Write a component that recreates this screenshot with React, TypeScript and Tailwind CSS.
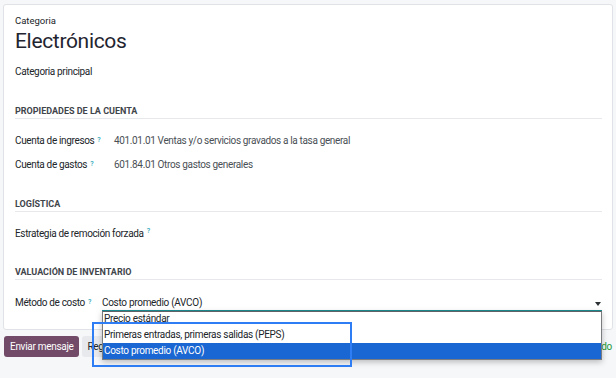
import React from "react";

function Help() {
  return (
    <sup className="ml-[3px] text-[7px] font-medium tracking-normal text-[#2aa7bb] relative top-[-2px]">?</sup>
  );
}

function SectionTitle({ title, className }: { title: string; className: string }) {
  return (
    <div className={`border-b border-[#e6e8eb] ${className}`}>
      <div className="h-[12px] leading-[12px] text-[9px] font-bold text-[#3f454b]">{title}</div>
    </div>
  );
}

function Row({ label, value, className }: { label: string; value: string; className: string }) {
  return (
    <div className={`flex h-[14px] items-center whitespace-nowrap text-[10px] tracking-[-0.35px] ${className}`}>
      <div className="w-[87px] shrink-0 text-[#212529]">
        {label}
        <Help />
      </div>
      <div className="pl-[12px] text-[#4a4f55]">{value}</div>
    </div>
  );
}

export default function App() {
  return (
    <div
      className="relative h-[378px] w-[616px] overflow-hidden bg-[#f6f7f9]"
      style={{ fontFamily: "Roboto, 'Liberation Sans', sans-serif" }}
    >
      <div className="ml-[3px] mt-[4px] w-[610px] rounded-[3px] border border-[#dfe2e6] bg-white pl-[11px] pr-[10px] pb-[18px]">
        <div className="mt-[10px] h-[12px] leading-[12px] text-[9.5px] text-[#212529]">Categoria</div>
        <div className="mt-[1px] h-[26px] leading-[26px] text-[21px] tracking-[-0.33px] text-[#1f2530]">
          Electrónicos
        </div>
        <div className="mt-[12px] h-[12px] leading-[12px] text-[10px] tracking-[-0.35px] text-[#212529]">
          Categoria principal
        </div>

        <SectionTitle title="PROPIEDADES DE LA CUENTA" className="mt-[27px] pb-[1px]" />
        <Row
          label="Cuenta de ingresos"
          value="401.01.01 Ventas y/o servicios gravados a la tasa general"
          className="mt-[14px]"
        />
        <Row label="Cuenta de gastos" value="601.84.01 Otros gastos generales" className="mt-[10px]" />

        <SectionTitle title="LOGÍSTICA" className="mt-[27px] pb-[1px]" />
        <div className="mt-[14px] flex h-[14px] items-center text-[10px] tracking-[-0.35px] text-[#212529]">
          Estrategia de remoción forzada
          <Help />
        </div>

        <SectionTitle title="VALUACIÓN DE INVENTARIO" className="mt-[26px] pb-[1px]" />
        <div className="mt-[14px] flex h-[17px] items-start text-[10px] tracking-[-0.35px]">
          <div className="w-[87px] shrink-0 pt-[2px] leading-[14px] text-[#212529]">
            Método de costo
            <Help />
          </div>
          <div className="flex h-[17px] flex-1 items-start justify-between border-b border-[#1b8f93]">
            <span className="pt-[2px] leading-[14px] tracking-[-0.3px] text-[#212529]">Costo promedio (AVCO)</span>
            <svg width="6" height="4" viewBox="0 0 6 4" className="mt-[8px] mr-[1px]">
              <path d="M0 0h6L3 4z" fill="#2c3136" />
            </svg>
          </div>
        </div>
      </div>

      <div className="mt-[6px] flex items-center pl-[4px] pr-[4px] text-[10px] tracking-[-0.3px]">
        <button className="h-[21px] rounded-[3px] bg-[#714b67] px-[6px] text-white">Enviar mensaje</button>
        <button className="ml-[3px] h-[21px] rounded-[3px] bg-[#e7e9ec] px-[5px] text-[#212529]">
          Registrar una nota
        </button>
        <div className="ml-auto text-[#1f9a3a]">Guardado</div>
      </div>

      <div className="absolute left-[102px] top-[311px] w-[500px] border border-[#7a7d80] border-t-[#5f6368] bg-white shadow-[0_2px_6px_rgba(0,0,0,0.25)]">
        <div className="h-[47px] overflow-hidden text-[10px] tracking-[-0.3px] text-[#212529]">
          <div className="h-[15px] pl-[1px] leading-[13px]">Precio estándar</div>
          <div className="h-[16px] pl-[1px] leading-[16px]">Primeras entradas, primeras salidas (PEPS)</div>
          <div className="h-[16px] bg-[#1a66d2] pl-[1px] leading-[16px] text-white">Costo promedio (AVCO)</div>
        </div>
      </div>

      <div className="absolute left-[92px] top-[322px] h-[45px] w-[260px] border-2 border-[#2f7df5]" />
    </div>
  );
}
